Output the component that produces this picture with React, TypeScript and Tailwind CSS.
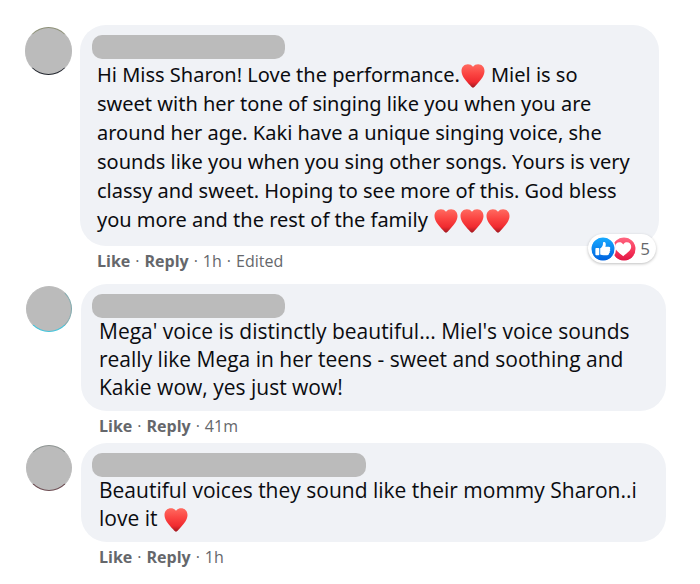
import clsx from "clsx";
import { Fragment } from "react";

type Comment = {
    id: number;
    lines: string[];
    time: string;
    avatarEdge: string;
    edited?: boolean;
    reactions?: number;
    wideName?: boolean;
};

const comments: Comment[] = [
    {
        id: 1,
        lines: [
            "Hi Miss Sharon! Love the performance.♥ Miel is so",
            "sweet with her tone of singing like you when you are",
            "around her age. Kaki have a unique singing voice, she",
            "sounds like you when you sing other songs. Yours is very",
            "classy and sweet. Hoping to see more of this. God bless",
            "you more and the rest of the family ♥♥♥",
        ],
        time: "1h",
        avatarEdge: "border-t-[#8d9078] border-b-[#20242c]",
        edited: true,
        reactions: 5,
    },
    {
        id: 2,
        lines: [
            "Mega' voice is distinctly beautiful... Miel's voice sounds",
            "really like Mega in her teens - sweet and soothing and",
            "Kakie wow, yes just wow!",
        ],
        time: "41m",
        avatarEdge: "border-r-[#7fa9ad] border-b-[#3fc4dc]",
    },
    {
        id: 3,
        lines: ["Beautiful voices they sound like their mommy Sharon..i", "love it ♥"],
        time: "1h",
        avatarEdge: "border-t-[#8e9492] border-b-[#6b4a50]",
        wideName: true,
    },
];

function Heart() {
    return (
        <svg viewBox="0 0 24 24" role="img" aria-label="heart" className="inline-block size-6 mx-px align-[-6px]">
            <defs>
                <linearGradient id="heart-fill" x1="0" y1="0" x2="0" y2="1">
                    <stop offset="0" stopColor="#ff6a60" />
                    <stop offset="0.4" stopColor="#fb4542" />
                    <stop offset="0.75" stopColor="#f02b30" />
                    <stop offset="1" stopColor="#9c181f" />
                </linearGradient>
            </defs>
            <path
                fill="url(#heart-fill)"
                d="M12 2.800C10.800 1.100 9 .300 6.900.300 3.200.300.500 3.100.500 7c0 5.800 5 10.300 8.800 14.600C10.400 22.900 11.200 23.800 12 23.800s1.600-.9 2.700-2.200C18.500 17.300 23.500 12.800 23.500 7c0-3.900-2.700-6.700-6.400-6.700-2.100 0-3.900.8-5.100 2.500z"
            />
        </svg>
    );
}

function LikeIcon() {
    return (
        <svg viewBox="0 0 24 24" className="relative z-10 size-6 rounded-full" aria-hidden="true">
            <defs>
                <linearGradient id="like-fill" x1="0" y1="0" x2="0" y2="1">
                    <stop offset="0" stopColor="#18aaff" />
                    <stop offset="1" stopColor="#0062df" />
                </linearGradient>
            </defs>
            <circle cx="12" cy="12" r="11.500" fill="url(#like-fill)" />
            <path
                fill="#fff"
                d="M5.200 10.900h2.300c.5 0 .8.3.8.8v5.700c0 .5-.3.8-.8.800H5.200c-.5 0-.8-.3-.8-.8v-5.700c0-.5.3-.8.8-.8zM9.200 11.300c1.300-.9 2.400-2.200 2.700-3.900.1-.8-.1-1.500.2-2 .4-.7 2.200-.4 2.600 1.100.3 1.100 0 2.200-.4 3.300h3.500c1.400 0 2 1.500 1 2.400.7.700.6 1.700-.2 2.200.4.800.1 1.600-.6 1.900.2 1.100-.5 1.900-1.700 1.900h-3.600c-1.400 0-2.500-.3-3.500-.8z"
            />
        </svg>
    );
}

function LoveIcon() {
    return (
        <svg viewBox="0 0 24 24" className="-ml-[3px] size-6 rounded-full" aria-hidden="true">
            <defs>
                <linearGradient id="love-fill" x1="0" y1="0" x2="0" y2="1">
                    <stop offset="0" stopColor="#ff6680" />
                    <stop offset="0.6" stopColor="#f63459" />
                    <stop offset="1" stopColor="#e01746" />
                </linearGradient>
            </defs>
            <circle cx="12" cy="12" r="11.500" fill="url(#love-fill)" />
            <circle cx="-9" cy="12" r="13" fill="#fff" />
            <path
                fill="#fff"
                d="M11.200 7.400C12.100 5.900 13.400 5.300 14.900 5.300c2.600 0 4.300 1.900 4.300 4.400 0 3.800-4.200 6-8 9.600-3.800-3.600-8-5.800-8-9.600 0-2.500 1.700-4.400 4.300-4.400 1.500 0 2.800.6 3.700 2.100z"
            />
        </svg>
    );
}

function CommentText({ lines }: { lines: string[] }) {
    return (
        <>
            {lines.map((line, i) => (
                <Fragment key={i}>
                    {line.split(/(♥)/).map((part, j) => (part === "♥" ? <Heart key={j} /> : part))}
                    {i < lines.length - 1 && <br />}
                </Fragment>
            ))}
        </>
    );
}

function CommentRow({ comment }: { comment: Comment }) {
    const hasReactions = comment.reactions !== undefined;

    return (
        <li className={clsx("flex", hasReactions ? "gap-2 pl-[25px] pr-[41px] mb-1.5" : "gap-[9px] pl-[26px] pr-[34px]")}>
            <div
                className={clsx(
                    "mt-0.5 shrink-0 rounded-full border border-[#bbb] bg-[#bbb]",
                    comment.avatarEdge,
                    hasReactions ? "h-12 w-[47px]" : "size-[46px]"
                )}
            />
            <div className="min-w-0 flex-1">
                <div className="relative rounded-[26px] bg-[#f0f2f6] pt-[10px] pb-[10px]">
                    <div
                        className={clsx(
                            "h-6 rounded-[10px] bg-[#bbb]",
                            hasReactions ? "ml-3" : "ml-[11px]",
                            comment.wideName ? "w-[274px]" : "w-[193px]"
                        )}
                    />
                    <p
                        className={clsx(
                            "whitespace-nowrap text-[#0b0c10]",
                            hasReactions
                                ? "px-[17px] pt-px pb-0.5 font-['Noto_Sans',sans-serif] text-[20px] leading-[29px]"
                                : "-mt-px px-[18px] text-[21px] leading-[28px]"
                        )}
                    >
                        <CommentText lines={comment.lines} />
                    </p>
                    {hasReactions && (
                        <button
                            type="button"
                            className="absolute right-[3px] -bottom-[17px] flex h-[29px] items-center rounded-full bg-white pl-[3px] pr-1.5 text-[17px] text-[#65676b] shadow-[0_1px_3px_rgba(0,0,0,0.25)]"
                        >
                            <LikeIcon />
                            <LoveIcon />
                            <span className="ml-1">{comment.reactions}</span>
                        </button>
                    )}
                </div>
                <div
                    className={clsx(
                        "flex gap-[5px] pt-1 pb-1.5 text-[16px] leading-[22px] text-[#65676b]",
                        hasReactions ? "px-[17px]" : "px-[18px]"
                    )}
                >
                    <button type="button" className="font-bold">Like</button>
                    <span>·</span>
                    <button type="button" className="font-bold">Reply</button>
                    <span>·</span>
                    <a href="#">{comment.time}</a>
                    {comment.edited && (
                        <>
                            <span>·</span>
                            <button type="button">Edited</button>
                        </>
                    )}
                </div>
            </div>
        </li>
    );
}

export default function App() {
    return (
        <main className="min-h-screen bg-white pt-[25px] font-['Open_Sans','Noto_Sans',sans-serif]">
            <ul>
                {comments.map((comment) => (
                    <CommentRow key={comment.id} comment={comment} />
                ))}
            </ul>
        </main>
    );
}
